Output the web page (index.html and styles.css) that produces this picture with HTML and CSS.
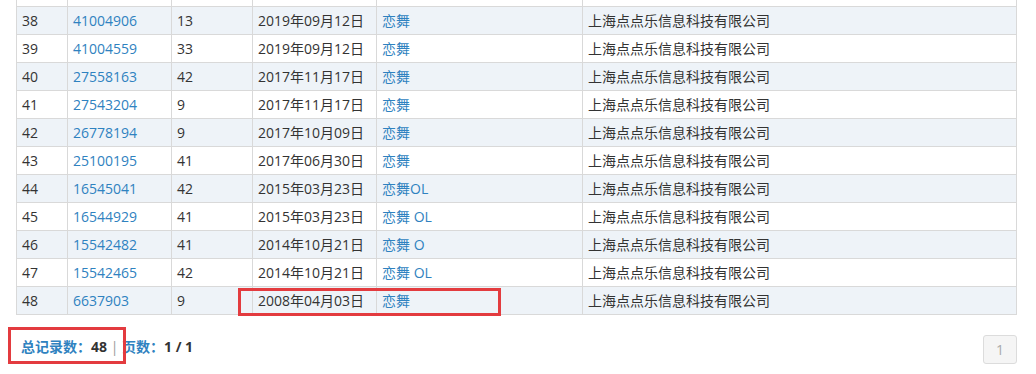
FILE: index.html
```html
<!DOCTYPE html>
<html lang="zh-CN">
<head>
<meta charset="utf-8">
<title>商标列表</title>
<link rel="stylesheet" href="styles.css">
</head>
<body>
<div class="page">
  <table class="grid">
    <colgroup>
      <col class="c-no"><col class="c-reg"><col class="c-cls"><col class="c-date"><col class="c-name"><col class="c-owner">
    </colgroup>
    <tbody>
      <tr class="cut"><td></td><td></td><td></td><td></td><td></td><td></td></tr>
      <tr class="odd"><td>38</td><td><a>41004906</a></td><td>13</td><td>2019年09月12日</td><td><a>恋舞</a></td><td>上海点点乐信息科技有限公司</td></tr>
      <tr><td>39</td><td><a>41004559</a></td><td>33</td><td>2019年09月12日</td><td><a>恋舞</a></td><td>上海点点乐信息科技有限公司</td></tr>
      <tr class="odd"><td>40</td><td><a>27558163</a></td><td>42</td><td>2017年11月17日</td><td><a>恋舞</a></td><td>上海点点乐信息科技有限公司</td></tr>
      <tr><td>41</td><td><a>27543204</a></td><td>9</td><td>2017年11月17日</td><td><a>恋舞</a></td><td>上海点点乐信息科技有限公司</td></tr>
      <tr class="odd"><td>42</td><td><a>26778194</a></td><td>9</td><td>2017年10月09日</td><td><a>恋舞</a></td><td>上海点点乐信息科技有限公司</td></tr>
      <tr><td>43</td><td><a>25100195</a></td><td>41</td><td>2017年06月30日</td><td><a>恋舞</a></td><td>上海点点乐信息科技有限公司</td></tr>
      <tr class="odd"><td>44</td><td><a>16545041</a></td><td>42</td><td>2015年03月23日</td><td><a>恋舞OL</a></td><td>上海点点乐信息科技有限公司</td></tr>
      <tr><td>45</td><td><a>16544929</a></td><td>41</td><td>2015年03月23日</td><td><a>恋舞 OL</a></td><td>上海点点乐信息科技有限公司</td></tr>
      <tr class="odd"><td>46</td><td><a>15542482</a></td><td>41</td><td>2014年10月21日</td><td><a>恋舞 O</a></td><td>上海点点乐信息科技有限公司</td></tr>
      <tr><td>47</td><td><a>15542465</a></td><td>42</td><td>2014年10月21日</td><td><a>恋舞 OL</a></td><td>上海点点乐信息科技有限公司</td></tr>
      <tr class="odd"><td>48</td><td><a>6637903</a></td><td>9</td><td>2008年04月03日</td><td><a>恋舞</a></td><td>上海点点乐信息科技有限公司</td></tr>
    </tbody>
  </table>
  <div class="footer">
    <div class="summary">
      <span class="label">总记录数：</span><b>48</b><span class="sep"> | </span><span class="label">页数：</span><b>1 / 1</b>
    </div>
    <div class="pager"><span class="page-btn">1</span></div>
  </div>
  <div class="mark mark-row"></div>
  <div class="mark mark-total"></div>
</div>
</body>
</html>
```

FILE: styles.css
```css
html, body {
  margin: 0;
  padding: 0;
  background: #fff;
}

.page {
  position: relative;
  padding: 0 19px 0 16px;
  height: 374px;
  overflow: hidden;
  font-family: "Open Sans", "Noto Sans CJK SC", sans-serif;
  font-size: 14px;
  color: #333;
}

.grid {
  width: 100%;
  border-collapse: collapse;
  table-layout: fixed;
}

.c-no { width: 51px; }
.c-reg { width: 104px; }
.c-cls { width: 81px; }
.c-date { width: 124px; }
.c-name { width: 206px; }
.c-owner { width: auto; }

.grid td {
  border: 1px solid #d9d9d9;
  padding: 4px 5px;
  height: 19px;
  line-height: 19px;
  white-space: nowrap;
  overflow: hidden;
}

.grid tr.cut td {
  border-top: 0;
  padding: 0;
  height: 6px;
  line-height: 6px;
}

.grid tr.odd td {
  background: #eef3f8;
}

.grid a {
  color: #2f82c0;
  text-decoration: none;
}

.footer {
  display: flex;
  justify-content: space-between;
  align-items: flex-start;
  margin-top: 20px;
}

.summary {
  padding-left: 5px;
  line-height: 24px;
}

.summary .label {
  color: #2f82c0;
  font-weight: 600;
}

.summary b {
  color: #333;
  font-weight: 700;
}

.summary .sep {
  color: #999;
}

.page-btn {
  display: flex;
  align-items: center;
  justify-content: center;
  box-sizing: border-box;
  width: 34px;
  height: 29px;
  border: 1px solid #dcdcdc;
  border-radius: 3px;
  background: #f5f5f5;
  color: #aaa;
  font-size: 14px;
}

.mark {
  position: absolute;
  border: 3px solid #e33b3f;
  box-sizing: border-box;
  pointer-events: none;
}

.mark-row {
  left: 238px;
  top: 288px;
  width: 263px;
  height: 28px;
}

.mark-total {
  left: 8px;
  top: 327px;
  width: 118px;
  height: 37px;
}
```
